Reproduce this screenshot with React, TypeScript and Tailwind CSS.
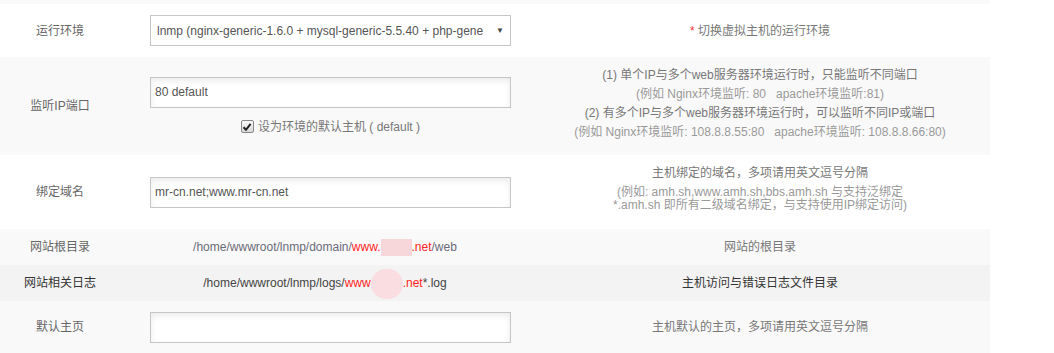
import React from "react";

const font = { fontFamily: '"Liberation Sans", Arial, "Noto Sans CJK SC", sans-serif' };

function Pink({ round }: { round?: boolean }) {
  return round ? (
    <span className="inline-block align-middle w-[32px] h-[30px] -my-[8px] rounded-full bg-[#f9dde0]" />
  ) : (
    <span className="inline-block align-middle w-[31px] h-[17px] -my-[4px] bg-[#f8d7db]" />
  );
}

function TextInput({ value }: { value: string }) {
  return (
    <div className="w-[361px] h-[31px] border border-[#c6c6c6] bg-white shadow-[inset_0_3px_6px_rgba(0,0,0,0.08)] flex items-center pl-[4px] text-[12px] text-[#555]">
      {value}
    </div>
  );
}

export default function App() {
  return (
    <div className="w-[1054px] h-[353px] bg-white overflow-hidden text-[12px] text-[#666]" style={font}>
      <div className="w-[990px]">
        <div className="h-[4px] bg-[#f9f9f9]" />

        {/* 运行环境 */}
        <div className="grid grid-cols-[120px_410px_460px] h-[53px] items-center bg-white">
          <div className="text-center">运行环境</div>
          <div className="pl-[30px]">
            <div className="w-[361px] h-[31px] border border-[#c6c6c6] bg-white flex items-center pl-[6px] pr-[6px] text-[12px] text-[#555]">
              <span className="flex-1 whitespace-nowrap overflow-hidden">lnmp (nginx-generic-1.6.0 + mysql-generic-5.5.40 + php-gene</span>
              <span className="text-[8px] text-[#444] ml-[4px]">▼</span>
            </div>
          </div>
          <div className="text-center text-[#777]">
            <span className="text-[#ff3333]">*</span> 切换虚拟主机的运行环境
          </div>
        </div>

        {/* 监听IP端口 */}
        <div className="grid grid-cols-[120px_410px_460px] h-[98px] items-center bg-[#f9f9f9]">
          <div className="text-center">监听IP端口</div>
          <div className="pl-[30px]">
            <TextInput value="80 default" />
            <div className="w-[361px] flex items-center justify-center mt-[10px] text-[#777]">
              <span className="w-[13px] h-[13px] border border-[#888] rounded-[2px] bg-gradient-to-b from-[#fafafa] to-[#d8d8d8] flex items-center justify-center mr-[4px]">
                <svg width="10" height="10" viewBox="0 0 10 10">
                  <path d="M1.5 5.2 L4 7.8 L8.6 1.8" stroke="#222" strokeWidth="2" fill="none" />
                </svg>
              </span>
              <span>设为环境的默认主机 ( default )</span>
            </div>
          </div>
          <div className="text-center leading-[19px] pb-[5px]">
            <div className="text-[#777]">(1) 单个IP与多个web服务器环境运行时，只能监听不同端口</div>
            <div className="text-[#999]">(例如 Nginx环境监听: 80&nbsp;&nbsp; apache环境监听:81)</div>
            <div className="text-[#777]">(2) 有多个IP与多个web服务器环境运行时，可以监听不同IP或端口</div>
            <div className="text-[#999]">(例如 Nginx环境监听: 108.8.8.55:80&nbsp;&nbsp; apache环境监听: 108.8.8.66:80)</div>
          </div>
        </div>

        {/* 绑定域名 */}
        <div className="grid grid-cols-[120px_410px_460px] h-[74px] items-center bg-white">
          <div className="text-center">绑定域名</div>
          <div className="pl-[30px]">
            <TextInput value="mr-cn.net;www.mr-cn.net" />
          </div>
          <div className="text-center pb-[9px]">
            <div className="text-[#777] leading-[20px]">主机绑定的域名，多项请用英文逗号分隔</div>
            <div className="text-[#999] leading-[13px] mt-[3px]">
              <div>(例如: amh.sh,www.amh.sh,bbs.amh.sh 与支持泛绑定</div>
              <div>*.amh.sh 即所有二级域名绑定，与支持使用IP绑定访问)</div>
            </div>
          </div>
        </div>

        {/* 网站根目录 */}
        <div className="grid grid-cols-[120px_410px_460px] h-[36px] items-center bg-[#f9f9f9]">
          <div className="text-center">网站根目录</div>
          <div className="text-center text-[#6b6b78] whitespace-nowrap">
            /home/wwwroot/lnmp/domain/<span className="text-[#ff2222]">www.</span>
            <Pink />
            <span className="text-[#ff2222]">.net</span>/web
          </div>
          <div className="text-center text-[#777]">网站的根目录</div>
        </div>

        {/* 网站相关日志 */}
        <div className="grid grid-cols-[120px_410px_460px] h-[36px] items-center bg-[#f3f3f3]">
          <div className="text-center text-[#333]">网站相关日志</div>
          <div className="text-center text-[#444] whitespace-nowrap">
            /home/wwwroot/lnmp/logs/<span className="text-[#ff2222]">www</span>
            <Pink round />
            <span className="text-[#ff2222]">.net</span>*.log
          </div>
          <div className="text-center text-[#333]">主机访问与错误日志文件目录</div>
        </div>

        {/* 默认主页 */}
        <div className="grid grid-cols-[120px_410px_460px] h-[52px] items-center bg-[#f9f9f9]">
          <div className="text-center">默认主页</div>
          <div className="pl-[30px]">
            <TextInput value="" />
          </div>
          <div className="text-center text-[#777]">主机默认的主页，多项请用英文逗号分隔</div>
        </div>
      </div>
    </div>
  );
}
